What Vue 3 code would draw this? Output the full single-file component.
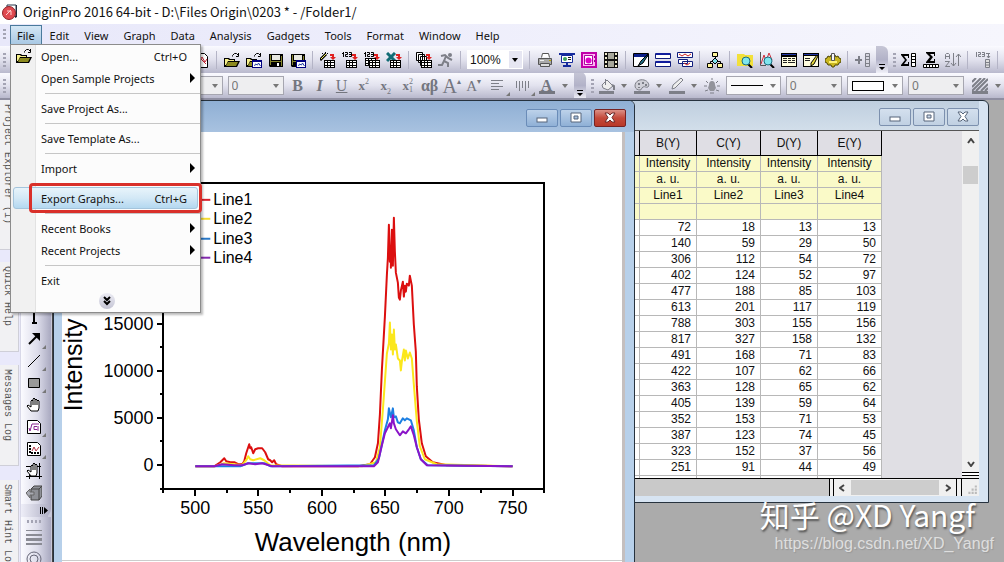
<script setup>
const menus = ['File', 'Edit', 'View', 'Graph', 'Data', 'Analysis', 'Gadgets', 'Tools', 'Format', 'Window', 'Help']

const fileMenu = [
  { label: 'Open...', key: 'Ctrl+O', icon: 'open' },
  { label: 'Open Sample Projects', sub: true },
  { sep: true },
  { label: 'Save Project As...' },
  { sep: true },
  { label: 'Save Template As...' },
  { sep: true },
  { label: 'Import', sub: true },
  { sep: true },
  { label: 'Export Graphs...', key: 'Ctrl+G', active: true },
  { sep: true },
  { label: 'Recent Books', sub: true },
  { label: 'Recent Projects', sub: true },
  { sep: true },
  { label: 'Exit' }
]

const grid = (x, y) =>
  `<path d="M${x} ${y}h11v8h-11z" fill="#000"/><path d="M${x + 1} ${y + 1}h2v1h-2zm3 0h2v1h-2zm3 0h3v1h-3zM${x + 1} ${y + 3}h2v2h-2zm3 0h2v2h-2zm3 0h3v2h-3zM${x + 1} ${y + 6}h2v1h-2zm3 0h2v1h-2zm3 0h3v1h-3z" fill="#fff"/>`
const redArrow = '<path d="M10 2h4v3h2l-3 3-3-3h2V4h-2z" fill="#e02020"/>'
const folder = '<path d="M0 6h5l1 1h5v2h5l-3 6H0z" fill="#000"/><path d="M1 7h3l1 1h5v1H4l-2 4H1z" fill="#f6f08a"/><path d="M4 10h10l-2 4H2z" fill="#8c8a1e"/><path d="M8.500 4.500v-1l2-2h2l2 2M14.500 1v3.500H12" fill="none" stroke="#000"/>'
const disk = '<path d="M1 2h14v13H2l-1-1z" fill="#000"/><path d="M4 3h8v5H4z" fill="#e8e8e0"/><path d="M2 3h1v10H2zM13 4h1v10h-1zM3 9h10v1H3z" fill="#85852c"/><path d="M9 11h2v3H9z" fill="#fff"/>'
const mini = '<path d="M6 8h10v8H6z" fill="#000080"/><path d="M7 10h8v5H7z" fill="#fff"/><path d="M8.500 14l1-2 2 1 1-2 2 3" fill="none" stroke="#223ca0"/>'
const lens = '<path d="M11 12l4 4" stroke="#000" stroke-width="2"/><circle cx="9" cy="9" r="4" fill="#7fe6ee" stroke="#1d6c80"/>'
const digits = '<path d="M1.500 0v5M0 1.500h2M3 .500h2.500v2h-2v2H6M7 .500h2.500v4H7M7 2.500h2" fill="none" stroke="#000"/>'
const gray = '#7d7f88'

const icons = {
  open: folder,
  page: '<path d="M2.500 1.500h8l3 3v11h-11z" fill="#fff" stroke="#000"/><path d="M4 12l4-7 3 5 2-3M5 5l7 7" stroke="#c02030" fill="none"/>',
  opentpl: folder + mini,
  save: disk,
  savetpl: disk + mini,
  wizard: '<path d="M0 8l6-6" stroke="#000" stroke-width="3"/><path d="M1 7l5-5" stroke="#f4ef60"/><path d="M5.500 0v2M8 1l-1 1M2 1l1 1" stroke="#000"/>' + redArrow + grid(4, 8),
  imp: digits + redArrow + grid(4, 8),
  impmulti: digits + redArrow + grid(1, 6) + grid(5, 8),
  excel: '<path d="M1 1l8 8M9 1L1 9" stroke="#116b74" stroke-width="3"/>' + redArrow + grid(4, 8),
  batch: '<path d="M.500 .500h6v8h-6zM2.500 2.500h6v8h-6zM4.500 4.500h6v9h-6z" fill="#fff" stroke="#000"/>' + redArrow + grid(5, 8),
  run: `<circle cx="12" cy="3" r="2" fill="${gray}"/><path d="M3 4l4-1 3 3 4 2M8 4L6 9l4 2v4M6 9l-2 4H0" fill="none" stroke="${gray}" stroke-width="2"/>`,
  print: '<path d="M4.500 5.500l1-4h6l1 4" fill="#fff" stroke="#555"/><path d="M1.500 6.500h13v6h-13z" fill="#a9a9a9" stroke="#555"/><path d="M3.500 11.500h9v3h-9z" fill="#ddd" stroke="#555"/><path d="M3 8.500h4" stroke="#eee"/><path d="M12 8.500h2" stroke="#b9a500"/>',
  slide: '<path d="M0 1h16v2H0z" fill="#152a9c"/><path d="M2.500 3.500h11v7h-11z" fill="#fff" stroke="#152a9c"/><circle cx="6" cy="7" r="2" fill="#3ca05a"/><path d="M9 5.500h3M9 7.500h3" stroke="#222"/><path d="M7 11h2v2h3v2H4v-2h3z" fill="#152a9c"/>',
  pink: '<path d="M0 0h16v16H0z" fill="#c000a8"/><path d="M2 2h12v12H2z" fill="#ffb4f4"/><path d="M3.500 3.500h8v9h-8z" fill="#fff" stroke="#b000a0"/><circle cx="7.500" cy="8.500" r="3" fill="#e000c8"/><path d="M13.500 4v2M13.500 8v2" stroke="#a00090"/>',
  film: '<path d="M1 0h14v16H1z" fill="#111"/><path d="M5 1h6v6H5zM5 9h6v6H5z" fill="#a8a89c"/><path d="M2 1h2v2H2zm0 4h2v2H2zm0 4h2v2H2zm0 4h2v2H2zM12 1h2v2h-2zm0 4h2v2h-2zm0 4h2v2h-2zm0 4h2v2h-2z" fill="#f0eccd"/>',
  edit: '<path d="M.500 1.500h15v13h-15z" fill="#fff" stroke="#000"/><path d="M1 2h14v3H1z" fill="#0b1f8a"/><path d="M15 2L8 9l-3 5 5-3 5-8z" fill="#1f7088" stroke="#000"/>',
  bars: '<path d="M.500 1.500h15v5H.500zM.500 9.500h15v5H.500z" fill="#fff" stroke="#101c7c"/><path d="M1 1h14v2H1zM1 9h14v2H1z" fill="#101c9c"/>',
  layers: '<path d="M.500 .500h15v5H.500z" fill="#fff" stroke="#101c7c"/><path d="M2 2l3 2 3-2 3 2 3-2" fill="none" stroke="#d02020"/><path d="M1.500 7.500h9v4h-9zM5.500 9.500h10v5h-10z" fill="#fff" stroke="#101c7c"/><path d="M7 11l3 2 3-2" fill="none" stroke="#d02020"/>',
  tree: '<path d="M5.500 .500h5v4h-5z" fill="#fff59a" stroke="#000"/><path d="M8.500 5v2M3.500 12V9.500H6M10 9.500h3.500V12" fill="none" stroke="#000"/><path d="M8 6l3 3-3 3-3-3z" fill="#7fe0ea" stroke="#000"/><path d="M.500 11.500h5v4h-5zM10.500 11.500h5v4h-5z" fill="#fff59a" stroke="#000"/>',
  find: '<path d="M0 2h7l1 1h8v11H0z" fill="#f2e03a"/>' + lens,
  findplot: '<path d="M1.500 0v13.500H7" fill="none" stroke="#555"/><path d="M2 12l3-9 2 6 3-8 3 7" fill="none" stroke="#d0303c"/>' + lens,
  tbl: '<path d="M0 1h16v14H0z" fill="#000"/><path d="M1 5h14v9H1z" fill="#fffde0"/><path d="M2 6.500h4M7 6.500h3M11 6.500h3M2 8.500h4M7 8.500h3M11 8.500h3M2 10.500h4M7 10.500h7" stroke="#222"/><path d="M1 2h14v1H1z" fill="#2438a8"/>',
  tbledit: '<path d="M0 1h16v14H0z" fill="#000"/><path d="M1 4h14v10H1z" fill="#fffde0"/><path d="M2 6.500h5M2 8.500h5" stroke="#222"/><path d="M1 2h14v1H1z" fill="#2438a8"/><path d="M14 3l-6 8v3l3-2 4-8z" fill="#e6d83c" stroke="#000"/>',
  gear: '<path d="M3 4l2 1 1-2h4l1 2 2-1 1 2 2 1v3l-2 1-1 2-3 0-1 2H7l-1-2-3 0-1-2-2-1V7l2-1z" fill="#c9b61e" stroke="#4c4400"/><path d="M4 10h8" stroke="#fff27a" stroke-width="2"/><path d="M6.500 1.500h3v7h-3z" fill="#f6f6f6" stroke="#555"/>',
  addcol: `<path d="M0 7h7v2H0zM3 4h2v8H3z" fill="${gray}"/><path d="M10.500 1.500h4v13h-4zM10 4.500h5M10 7.500h5M10 11.500h5" fill="#d6d6e0" stroke="${gray}"/>`,
  sumcol: '<path d="M0 2h8v4H7V4H3l3 4-3 4h4v-2h1v4H0v-1l4-5-4-5z" fill="#000"/><path d="M10.500 1.500h4v13h-4zM10 4.500h5M10 7.500h5M10 10.500h5" fill="#fff" stroke="#000"/>',
  sumrow: '<path d="M3 0h9v4h-1V2H7l3 3-3 4h4V7h1v4H3v-1l4-5-4-4z" fill="#000"/><path d="M.500 12.500h15v3H.500zM3.500 12v3M6.500 12v3M9.500 12v3M12.500 12v3" fill="#fff" stroke="#000"/>',
  sort: `<path d="M.500 7V2.500l1-1h2l1 1V7M1 4.500h3M0 9.500h4.500l-4 5H5M8.500 1v13M6 11l2.500 3 2.500-3M13.500 14V2M11 5l2.500-3 2.500 3" fill="none" stroke="${gray}"/>`,
  setcol: `<path d="M1.500 0v5M3 .500h2.500v2h-2v2H6M7 .500h2.500v4H7M7 2.500h2M11 1.500h4M13.500 1v5M12 4l1.500 2L15 4" fill="none" stroke="${gray}"/><path d="M10.500 7.500h4v8h-4zM10 10.500h5M10 13h5" fill="#ddd" stroke="${gray}"/>`,
  align: `<path d="M2 2.500h12M2 5.500h8M2 8.500h12M2 11.500h8" stroke="${gray}"/>`,
  valign: `<path d="M2.500 3v7M5.500 3v10M8.500 3v7M11.500 3v10M14.500 3v7" stroke="${gray}"/>`,
  fill: `<path d="M3 7l5-5 6 6-5 4-5-2z" fill="#eee" stroke="${gray}"/><path d="M6.500 1v6" stroke="${gray}"/><path d="M13 7l2 1v4" fill="none" stroke="${gray}" stroke-width="2"/><path d="M0 13h15v3H0z" fill="${gray}"/>`,
  palette: `<path d="M1 8c0-5 5-7 9-6s6 5 4 7c-2 1-3-1-5 0s-1 3-3 3-5-1-5-4z" fill="#d0d0d8" stroke="${gray}"/><path d="M4 5h2v2H4zM8 4h2v2H8zM11 6h2v2h-2zM4 9h2v1H4z" fill="${gray}"/><path d="M0 13h16v3H0z" fill="${gray}"/>`,
  pen: `<path d="M3 11l1-4 8-7 2 2-8 8z" fill="#eee" stroke="${gray}"/><path d="M0 13h16v3H0z" fill="${gray}"/>`,
  bulb: `<path d="M5 7a3 4 0 016 0l1 3-2 3H6l-2-3z" fill="#93949c"/><path d="M8 0v2M2 3l2 2M14 3l-2 2M0 8h3M13 8h3M1 13l3-1M15 13l-3-1M6 15h4" stroke="${gray}"/>`,
  hatch: `<path d="M0 4l4-4M0 9l9-9M0 13L13 0M4 13L16 1M9 13l7-7M13 13l3-3" stroke="${gray}" stroke-width="2"/><path d="M0 13h16v3H0z" fill="${gray}"/>`,
  ttool: '<path d="M3 2h11v2H9v9h2v2H6v-2h1V4H3z" fill="#000"/>',
  arrow: '<path d="M3 13L12 4" stroke="#000" stroke-width="2"/><path d="M6 2h8v8z" fill="#000"/>',
  line: '<path d="M2 14L14 2" stroke="#000"/>',
  rect: '<path d="M2.500 3.500h11v9h-11z" fill="#999" stroke="#000"/>',
  hand: '<path d="M5 14l-4-5 1-1 3 2V4l1-1 1 1V2l1-1 1 1v1l1-1 1 1v1l1-1 1 1v7l-1 3z" fill="#fff" stroke="#000"/><path d="M7 4v4M9 3v5M11 4v4" stroke="#000"/>',
  formula: '<path d="M1.500 1.500h10l3 3v10h-13z" fill="#fff" stroke="#000"/><path d="M3 9l1 3 2-7h7M11 7.500H8v3h3l1 1V7" fill="none" stroke="#8a2492"/>',
  gpage: '<path d="M1.500 1.500h10l3 3v10h-13z" fill="#fff" stroke="#000"/><path d="M4 4v8h9" fill="none" stroke="#000" stroke-dasharray="2 1" stroke-width="2"/><path d="M6 10l2-4 2 4 3-4" fill="none" stroke="#b03040"/>',
  handaxes: '<path d="M0 3.500h15M13.500 0v16M0 13.500h16M3.500 11v5" stroke="#000"/><path d="M5 13L1 8l1-1 3 2V3l1-1 1 1V1l1-1 1 1v1l1-1 1 1v8l-1 3z" fill="#fff" stroke="#000"/><path d="M7 3v4M9 2v5" stroke="#000"/>',
  cube: '<path d="M5 4l3-3h8v10l-3 4H5z" fill="#8e9096" stroke="#444"/><path d="M5 4h8v11M13 4l3-3" fill="none" stroke="#444"/><path d="M0 8l4-4v3h4v3H4v3z" fill="#a8aab2" stroke="#666"/>',
  lines: '<path d="M0 1h16v1H0zM0 5h16v2H0zM0 9h16v3H0zM0 14h16v2H0z" fill="#8a8b94"/>',
  rings: '<circle cx="8" cy="8" r="7" fill="none" stroke="#667"/><circle cx="8" cy="8" r="4" fill="none" stroke="#667"/>'
}

const barOne = [
  'page', 'page', 'page', 'page', 'page', 'page', 'page', 'page', 'page', '|',
  'open', 'opentpl', 'save', 'savetpl', '|', 'wizard', 'imp', 'impmulti', 'excel', '|', 'batch', 'run', '|',
  'ZOOM', '|', 'print', 'slide', 'pink', 'film', '|', 'edit', 'bars', 'layers', '|', 'tree', '|',
  'find', 'findplot', 'tbl', 'tbledit', 'gear', '|', 'addcol', 'MORE', 'GRIP', 'sumcol', 'sumrow', 'sort', '|', 'setcol', '|'
]

const dockTabs = [
  { text: 'Project Explorer (1)', cls: 'first' },
  { text: 'Quick Help', cls: 'second' },
  { text: 'Messages Log', cls: 'third' },
  { text: 'Smart Hint Log', cls: 'fourth' }
]
const palette = ['page', 'page', 'page', 'page', 'page', 'page', 'page', 'page', 'page', 'ttool', 'arrow', 'line', 'rect', 'hand', 'formula', 'gpage', 'handaxes', 'cube']
const cornered = ['arrow', 'line', 'rect', 'formula', 'gpage']

const columns = ['B(Y)', 'C(Y)', 'D(Y)', 'E(Y)']
const labels = [
  ['Intensity', 'Intensity', 'Intensity', 'Intensity'],
  ['a. u.', 'a. u.', 'a. u.', 'a. u.'],
  ['Line1', 'Line2', 'Line3', 'Line4'],
  ['', '', '', '']
]
const rows = [
  [72, 18, 13, 13], [140, 59, 29, 50], [306, 112, 54, 72], [402, 124, 52, 97],
  [477, 188, 85, 103], [613, 201, 117, 119], [788, 303, 155, 156], [817, 327, 158, 132],
  [491, 168, 71, 83], [422, 107, 62, 66], [363, 128, 65, 62], [405, 139, 59, 64],
  [352, 153, 71, 53], [387, 123, 74, 45], [323, 152, 37, 56], [251, 91, 44, 49],
  ['', '', '', '']
]

const yMajor = [[0, 466], [5000, 419], [10000, 372], [15000, 324]]
const yMinor = [442, 395, 348]
const xMajor = [[500, 195], [550, 258], [600, 322], [650, 385], [700, 449], [750, 513]]
const xMinor = [163, 227, 290, 354, 417, 481, 544]

const series = [
  { name: 'Line1', color: '#dc0f0f', key: '#d8202c', y: 200, pts: '195,467 214,467 217,465 220,463 222,461 224,459 226,462 230,463 234,463 238,465 242,465 244,462 246,454 249,445 250,449 251,448 253,454 255,450 258,449 262,449 265,453 268,460 270,461 272,463 274,461 276,465 282,467 358,467 370,465 375,458 378,444 380,415 382,370 385,317 387,275 388,258 389,225 390,262 391,246 391,268 392,230 393,266 394,218 395,252 396,273 398,283 399,298 400,300 401,291 403,282 404,297 405,286 406,292 407,284 409,286 410,276 412,286 414,325 416,352 417,387 419,420 422,444 426,457 433,463 447,466 513,467' },
  { name: 'Line2', color: '#fbe71c', key: '#f5dc30', y: 219, pts: '195,467 215,467 224,464 234,465 242,466 246,461 248,457 250,460 253,461 260,459 264,461 270,466 362,467 376,463 380,448 383,410 385,382 387,354 389,344 390,323 391,350 392,335 393,355 394,330 395,350 396,345 398,359 400,361 401,371 402,362 404,350 405,361 406,351 408,359 410,353 412,359 414,385 417,422 420,447 425,460 437,465 513,467' },
  { name: 'Line3', color: '#1c7fe2', key: '#2878c8', y: 239, pts: '195,467 240,467 248,464 264,464 270,467 374,466 379,459 382,445 385,431 388,420 389,409 391,418 393,409 394,418 396,417 398,423 400,424 403,419 405,421 407,419 411,421 414,431 417,448 421,460 428,466 513,467' },
  { name: 'Line4', color: '#8a14c8', key: '#842ab0', y: 258, pts: '195,467 214,467 222,465 234,466 242,466 248,464 255,465 262,464 272,467 374,467 378,463 382,446 385,434 388,428 390,424 391,429 393,416 394,424 396,430 400,436 403,432 406,434 409,430 411,427 414,436 417,448 421,460 427,466 513,467' }
]
</script>

<template>
  <div class="app">
    <header class="title">
      <svg class="logo" viewBox="0 0 16 16"><path d="M5 1h10v12l-2 1V3H5z" fill="#16202e" /><path d="M5 1h9v11H5z" fill="#fff" stroke="#26364a" /><circle cx="7" cy="9" r="6.500" fill="#e04a50" stroke="#8f2228" /><path d="M4 11l5-5M5 7h4v4" stroke="#ffd0d0" fill="none" /></svg>
      <h1>OriginPro 2016 64-bit - D:\Files Origin\0203 * - /Folder1/</h1>
    </header>

    <nav class="menubar" aria-label="Main menu">
      <i class="grip" />
      <button v-for="m in menus" :key="m" type="button" :class="{ on: m === 'File' }">{{ m }}</button>
    </nav>

    <div class="bar one">
      <i class="grip" />
      <div class="items">
        <template v-for="(it, i) in barOne" :key="i">
          <i v-if="it === '|'" class="sep" />
          <span v-else-if="it === 'ZOOM'" class="combo zoom live">
            <select aria-label="Zoom"><option>100%</option></select><b class="tri" />
          </span>
          <button v-else-if="it === 'MORE'" type="button" class="more" aria-label="More buttons"><svg viewBox="0 0 12 26"><path d="M3 17h6v1H3zM3 20h6l-3 3z" fill="#000" /></svg></button>
          <i v-else-if="it === 'GRIP'" class="grip" />
          <button v-else type="button" class="tool" :aria-label="it"><svg viewBox="0 0 16 16" v-html="icons[it]" /></button>
        </template>
      </div>
    </div>

    <div class="bar two">
      <i class="grip" />
      <span class="combo font"><select aria-label="Font"><option></option></select><b class="tri" /></span>
      <span class="combo size"><select aria-label="Font size"><option>0</option></select><b class="tri" /></span>
      <button type="button" class="tool txt bold">B</button>
      <button type="button" class="tool txt ital">I</button>
      <button type="button" class="tool txt under">U</button>
      <button type="button" class="tool txt small">x<sup>2</sup></button>
      <button type="button" class="tool txt small">x<sub>2</sub></button>
      <button type="button" class="tool txt small">x<span class="stack"><span>2</span><span>1</span></span></button>
      <button type="button" class="tool txt greek">αβ</button>
      <button type="button" class="tool txt big">A<sup>▴</sup></button>
      <button type="button" class="tool txt mid">A<sup>▾</sup></button>
      <button type="button" class="tool corner wide" aria-label="Align"><svg viewBox="0 0 16 16" v-html="icons.align" /></button>
      <button type="button" class="tool corner wide" aria-label="Vertical align"><svg viewBox="0 0 16 16" v-html="icons.valign" /></button>
      <button type="button" class="tool txt color">A</button>
      <button type="button" class="drop" aria-label="Font color options"><b class="tri" /></button>
      <button type="button" class="more" aria-label="More format buttons"><svg viewBox="0 0 12 26"><path d="M3 17h6v1H3zM3 20h6l-3 3z" fill="#000" /></svg></button>
      <i class="grip" />
      <template v-for="n in ['fill', 'palette', 'pen']" :key="n">
        <button type="button" class="tool" :aria-label="n"><svg viewBox="0 0 16 16" v-html="icons[n]" /></button>
        <button type="button" class="drop" :aria-label="n + ' options'"><b class="tri" /></button>
      </template>
      <button type="button" class="tool" aria-label="Lighting"><svg viewBox="0 0 16 16" v-html="icons.bulb" /></button>
      <span class="combo sample pale"><select aria-label="Line style"><option></option></select><i class="rule" /><b class="tri" /></span>
      <span class="combo size"><select aria-label="Line width"><option>0</option></select><b class="tri" /></span>
      <span class="combo sample pale"><select aria-label="Pattern"><option></option></select><i class="box" /><b class="tri" /></span>
      <span class="combo size"><select aria-label="Pattern width"><option>0</option></select><b class="tri" /></span>
      <button type="button" class="tool hatch" aria-label="Hatch"><svg viewBox="0 0 16 16" v-html="icons.hatch" /></button>
      <button type="button" class="drop" aria-label="Hatch options"><b class="tri" /></button>
    </div>

    <main class="work">
      <aside class="dock">
        <button v-for="t in dockTabs" :key="t.text" type="button" :class="t.cls">{{ t.text }}</button>
      </aside>
      <div class="palette">
        <div class="pgroup">
          <button v-for="(p, i) in palette" :key="i" type="button" class="tool" :class="{ corner: cornered.includes(p) }" :aria-label="p"><svg viewBox="0 0 16 16" v-html="icons[p]" /></button>
          <button type="button" class="pmore" aria-label="More tools"><svg viewBox="0 0 8 7"><path d="M0 0h1v7H0zM2 0h1v7H2zM4 0l4 3.500L4 7z" fill="#000" /></svg></button>
        </div>
        <div class="pgroup next">
          <i class="hgrip" />
          <button type="button" class="tool" aria-label="Line widths"><svg viewBox="0 0 16 16" v-html="icons.lines" /></button>
          <button type="button" class="tool" aria-label="Rings"><svg viewBox="0 0 16 16" v-html="icons.rings" /></button>
        </div>
      </div>

      <div class="desktop">
        <section class="win sheet" aria-label="Worksheet">
          <div class="wtitle">
            <button type="button" aria-label="Minimize sheet"><svg viewBox="0 0 14 14"><rect x="2" y="7" width="10" height="4" fill="#fff" stroke="#56657a" /></svg></button>
            <button type="button" aria-label="Maximize sheet"><svg viewBox="0 0 14 14"><path d="M2 2h10v9H2zM5 5v3h4V5z" fill="#fff" fill-rule="evenodd" stroke="#56657a" /></svg></button>
            <button type="button" aria-label="Close sheet"><svg viewBox="0 0 14 14"><path d="M2 2h3l2 2 2-2h3L9 6.500l3 4.500H9L7 9l-2 2H2l3-4.500z" fill="#fff" stroke="#56657a" /></svg></button>
          </div>
          <div class="sbody">
            <div class="tablebox">
              <table>
                <thead>
                  <tr><th class="lead" /><th v-for="c in columns" :key="c">{{ c }}</th></tr>
                </thead>
                <tbody>
                  <tr v-for="(r, i) in labels" :key="'l' + i" class="label"><td /><td v-for="(c, j) in r" :key="j">{{ c }}</td></tr>
                  <tr v-for="(r, i) in rows" :key="'r' + i"><td /><td v-for="(c, j) in r" :key="j">{{ c }}</td></tr>
                </tbody>
              </table>
            </div>
            <div class="vscroll">
              <svg viewBox="0 0 8 6"><path d="M1 5l3-4 3 4" fill="none" stroke="#444" stroke-width="2" /></svg>
              <i class="thumb" />
              <svg class="down" viewBox="0 0 8 6"><path d="M1 1l3 4 3-4" fill="none" stroke="#444" stroke-width="2" /></svg>
              <i class="split" />
            </div>
          </div>
          <div class="sfoot">
            <i class="tabs" />
            <div class="hscroll">
              <svg viewBox="0 0 6 8"><path d="M5 1L1 4l4 3" fill="none" stroke="#444" stroke-width="2" /></svg>
              <i class="thumb" />
              <svg viewBox="0 0 6 8"><path d="M1 1l4 3-4 3" fill="none" stroke="#444" stroke-width="2" /></svg>
            </div>
            <svg class="sizer" viewBox="0 0 16 16"><path d="M12 6h2v2h-2zM9 9h2v2H9zM12 9h2v2h-2zM6 12h2v2H6zM9 12h2v2H9zM12 12h2v2h-2z" fill="#bbb" /></svg>
          </div>
        </section>

        <section class="win graph" aria-label="Graph">
          <div class="wtitle">
            <button type="button" aria-label="Minimize graph"><svg viewBox="0 0 14 14"><rect x="2" y="7" width="10" height="4" fill="#fff" stroke="#56657a" /></svg></button>
            <button type="button" aria-label="Maximize graph"><svg viewBox="0 0 14 14"><path d="M2 2h10v9H2zM5 5v3h4V5z" fill="#fff" fill-rule="evenodd" stroke="#56657a" /></svg></button>
            <button type="button" class="close" aria-label="Close graph"><svg viewBox="0 0 14 14"><path d="M2 2h3l2 2 2-2h3L9 6.500l3 4.500H9L7 9l-2 2H2l3-4.500z" fill="#fff" stroke="#6b2a2a" /></svg></button>
          </div>
          <div class="gbody">
            <svg class="plot" viewBox="62 132 560 429">
              <g fill="none" stroke="#000" stroke-width="2" shape-rendering="crispEdges">
                <rect x="163" y="183" width="381" height="307" />
                <path v-for="t in yMajor" :key="'a' + t[0]" :d="`M157 ${t[1]}h6`" />
                <path v-for="t in yMinor" :key="'b' + t" :d="`M160 ${t}h3`" />
                <path d="M160 490h3" />
                <path v-for="t in xMajor" :key="'c' + t[0]" :d="`M${t[1]} 490v7`" />
                <path v-for="t in xMinor" :key="'d' + t" :d="`M${t} 490v4`" />
              </g>
              <g font-size="18">
                <text v-for="t in yMajor" :key="t[0]" x="153" :y="t[1] + 6" text-anchor="end">{{ t[0] }}</text>
                <text v-for="t in xMajor" :key="t[0]" :x="t[1]" y="515" text-anchor="middle">{{ t[0] }}</text>
              </g>
              <text x="353" y="552" font-size="26" text-anchor="middle">Wavelength (nm)</text>
              <text transform="translate(81 412) rotate(-90)" font-size="25">Intensity</text>
              <g v-for="s in series" :key="s.name">
                <polyline :points="s.pts" fill="none" :stroke="s.color" stroke-width="2" stroke-linejoin="round" />
                <path :d="`M180 ${s.y}h30`" :stroke="s.key" stroke-width="2" />
                <text x="213" :y="s.y + 5" font-size="16">{{ s.name }}</text>
              </g>
            </svg>
          </div>
        </section>

        <div class="marks">
          <p class="zhihu">知乎 @XD Yangf</p>
          <p class="csdn">https://blog.csdn.net/XD_Yangf</p>
        </div>
      </div>
    </main>

    <div class="dropdown" role="menu">
      <template v-for="(m, i) in fileMenu" :key="i">
        <i v-if="m.sep" class="msep" />
        <button v-else type="button" role="menuitem" class="mitem" :class="{ active: m.active }">
          <svg v-if="m.icon" class="micon" viewBox="0 0 16 16" v-html="icons[m.icon]" />
          <span>{{ m.label }}</span>
          <kbd v-if="m.key">{{ m.key }}</kbd>
          <b v-if="m.sub" class="sub" />
          <i v-if="m.active" class="frame" />
        </button>
      </template>
      <button type="button" class="expand" aria-label="Show full menu"><svg viewBox="0 0 14 14"><path d="M4 3l3 3 3-3M4 7l3 3 3-3" fill="none" stroke="#000" stroke-width="2" /></svg></button>
    </div>
  </div>
</template>

<style>
body { margin: 0; }
</style>

<style scoped>
* { box-sizing: border-box; }
.app { position: relative; display: flex; flex-direction: column; height: 100vh; overflow: hidden; background: #ebebfa; color: #111; font-family: "Noto Sans", "Noto Sans CJK SC", sans-serif; font-size: 11px; }
button { margin: 0; padding: 0; border: 0; background: none; font: inherit; color: inherit; }
button, i, b, svg { flex: none; }
svg { display: block; }

.title { display: flex; align-items: center; gap: 5px; height: 24px; padding-left: 2px; background: #fff; }
.logo { width: 16px; height: 16px; }
h1 { margin: 0; font-family: "Noto Sans CJK SC", "Noto Sans", sans-serif; font-size: 13px; font-weight: 400; line-height: 20px; white-space: nowrap; }

.grip { width: 3px; height: 14px; margin: 0 2px 0 3px; background: repeating-linear-gradient(#a4a4b4 0 2px, transparent 2px 4px); }
.menubar { display: flex; align-items: center; height: 22px; background: linear-gradient(90deg, #e8e8fa, #f6f6fd); }
.menubar .grip { height: 12px; }
.menubar button { height: 20px; margin-left: 1px; padding: 0 7px; white-space: nowrap; }
.menubar .on { margin-left: 2px; padding: 0 6px; border: 1px solid #4a7a9c; border-bottom-color: #88a8c4; background: linear-gradient(#d4e7f5, #a9c9e4); }

.bar { display: flex; align-items: center; height: 27px; background: linear-gradient(#fafaff, #e2e2ee 50%, #b9b9cd); overflow: hidden; }
.bar.two { border-bottom: 2px solid #8f8fa2; }
.items { display: flex; align-items: center; padding-left: 7px; }
.tool { position: relative; display: flex; align-items: center; justify-content: center; width: 22px; height: 22px; }
.tool svg { width: 16px; height: 16px; }
.wide { width: 25px; }
.corner::after { content: ""; position: absolute; right: 0; bottom: 1px; border: 2px solid transparent; border-right-color: #777; border-bottom-color: #777; }
.sep { width: 1px; height: 18px; margin: 0 4px 0 3px; background: #b4b4c6; }
.tri { width: 0; border: 3px solid transparent; border-top: 4px solid #777; border-bottom: 0; }
.drop { display: flex; align-items: center; justify-content: center; width: 13px; height: 22px; }
.more { width: 12px; height: 27px; margin: 0 2px; background: linear-gradient(#c6c6d6, #b2b2c8 50%, #f0f0f8); border-radius: 0 6px 0 0; }
.more svg { width: 12px; height: 26px; }
.combo { position: relative; display: flex; align-items: center; height: 19px; border: 1px solid #a6a6b0; background: #eeeef0; }
.combo select { width: 100%; height: 100%; padding: 0 3px; border: 0; appearance: none; background: none; color: #777; font-family: inherit; font-size: 12px; opacity: 1; }
.combo .tri { position: absolute; right: 4px; }
.live { border-color: #fff; background: #fff; }
.live select { padding: 0 2px; color: #111; font-family: "Liberation Sans", sans-serif; }
.live::before { content: ""; position: absolute; right: 0; width: 13px; height: 100%; background: #e6e6f2; }
.live .tri { border-top-color: #000; }
.zoom { width: 56px; margin: 0 3px 0 2px; }
.font { width: 212px; margin-left: 6px; }
.size { width: 57px; margin-left: 5px; }
.two .size + .txt { margin-left: 3px; }
.sample { width: 56px; margin-left: 3px; }
.size + .sample { width: 57px; margin-left: 5px; }
.pale { background: #f8f8fa; }
.rule, .box { position: absolute; left: 4px; width: 32px; height: 1px; background: #000; }
.box { height: 10px; border: 1px solid #000; background: #fff; }
.hatch { margin-left: 5px; }
.txt { color: #74767f; font-family: "Liberation Serif", serif; font-size: 16px; line-height: 20px; }
.bold, .small, .greek { font-weight: 700; }
.ital { font-style: italic; font-weight: 700; }
.under { text-decoration: underline; }
.small { font-size: 13px; }
.txt sup, .txt sub { align-self: flex-start; font-size: 8px; line-height: 14px; font-weight: 400; }
.txt sub { align-self: flex-end; line-height: 10px; }
.stack { display: flex; flex-direction: column; font-size: 8px; line-height: 8px; font-weight: 400; }
.big { font-size: 20px; }
.mid { font-size: 15px; }
.color { width: 24px; font-weight: 700; line-height: 15px; }
.color::after { content: ""; position: absolute; left: 4px; right: 4px; bottom: 3px; height: 3px; background: #74767f; }

.work { display: flex; flex: 1; min-height: 0; }
.dock { display: flex; flex-direction: column; width: 20px; background: #e9e9fb; overflow: hidden; }
.dock button { width: 19px; padding: 4px 4px 0 0; border-right: 1px solid #cfcfd8; border-bottom: 1px solid #cfcfd8; background: #f1f1f3; color: #555; font-family: "Liberation Mono", monospace; font-size: 10px; line-height: 14px; text-align: left; writing-mode: vertical-rl; white-space: nowrap; }
.dock .first { height: 150px; }
.dock .second { height: 90px; margin-top: 12px; }
.dock .third { height: 101px; margin-top: 13px; }
.dock .fourth { height: 120px; margin-top: 14px; }
.palette { display: flex; flex-direction: column; width: 33px; padding-right: 1px; background: #c8c8d8; border-right: 1px solid #444; border-left: 1px solid #d8d8e8; overflow: hidden; }
.pgroup { display: flex; flex-direction: column; align-items: center; padding: 8px 4px 0 0; border-radius: 0 0 8px 0; background: linear-gradient(90deg, #fbfbff, #dcdcea 55%, #a9a9c0); }
.pgroup .tool { width: 24px; }
.pmore { display: flex; align-items: center; justify-content: flex-end; width: 27px; height: 13px; background: linear-gradient(90deg, #eeeef8, #b4b4c8); }
.pmore svg { width: 8px; height: 7px; }
.next { flex: 1; padding-top: 3px; border-radius: 0; }
.hgrip { width: 15px; height: 3px; margin: 0 0 3px; background: repeating-linear-gradient(90deg, #a4a4b4 0 2px, transparent 2px 4px); }

.desktop { position: relative; flex: 1; min-width: 0; background: #ababab; overflow: hidden; }
.win { position: absolute; display: flex; flex-direction: column; border: 1px solid #26323e; border-radius: 0 6px 0 0; font-family: "Liberation Sans", Arial, sans-serif; }
.wtitle { display: flex; justify-content: flex-end; gap: 2px; height: 31px; padding: 7px 0 0; }
.wtitle button { display: flex; align-items: center; justify-content: center; width: 32px; height: 18px; border: 1px solid #7c90ae; border-radius: 2px; background: linear-gradient(#d4e0ee, #c0d0e2); }
.wtitle svg { width: 14px; height: 14px; }
.graph { top: 0; left: 0; width: 582px; height: 520px; background: #b7d0ea; }
.graph .wtitle { padding: 8px 8px 0 0; background: linear-gradient(#8fafd4, #a8c2e0); border-radius: 0 5px 0 0; }
.graph .wtitle button { background: linear-gradient(#bdd2ea, #8fb0d6); border-color: #6a8cb8; }
.graph .wtitle .close { border-color: #722; background: linear-gradient(#dc9086, #c4493a 50%, #b83828); }
.gbody { flex: 1; margin: 0 9px 8px 8px; border-right: 3px solid #c4bfbf; background: #fff; overflow: hidden; }
.plot { width: 560px; height: 429px; font-family: "Liberation Sans", Arial, sans-serif; border-bottom: 1px solid #ccc; }

.sheet { top: 0; left: 540px; width: 396px; height: 403px; padding: 0 9px 6px 0; background: #d7e4f2; }
.sheet .wtitle { height: 30px; border-bottom: 1px solid #555; background: linear-gradient(#bfcfdf, #d2deea); }
.sbody { display: flex; height: 347px; background: #e0dfe4; overflow: hidden; }
.tablebox { flex: 1; overflow: hidden; }
table { table-layout: fixed; width: 287px; border-collapse: collapse; font-size: 12px; line-height: 15px; background: #fff; }
th, td { padding: 0 5px 0 0; border: 1px solid #b8b8b8; border-top: 0; text-align: right; overflow: hidden; }
td { height: 16px; }
th { width: 64px; height: 24px; padding: 2px 0 0; border: 1px solid #000; border-top: 0; background: #dfdee4; font-weight: 400; text-align: center; }
th.lead { width: 45px; }
th:nth-child(2), th:nth-child(4) { width: 57px; }
.label td { padding: 0; background: #fafac8; text-align: center; }
.vscroll { display: flex; flex-direction: column; align-items: center; width: 17px; padding-top: 7px; background: #f0f0f0; }
.vscroll svg { width: 8px; height: 6px; }
.vscroll .thumb { width: 15px; height: 18px; margin-top: 22px; background: #cdcdcd; }
.vscroll .down { margin-top: auto; margin-bottom: 5px; }
.split { width: 17px; height: 4px; margin-bottom: 2px; border: 1px solid #000; border-width: 1px 0; background: #fff; }
.sfoot { display: flex; height: 18px; border-top: 1px solid #000; background: #f0f0f0; }
.tabs { flex: 1; background: #c9c9c9; border-right: 1px solid #000; }
.hscroll { display: flex; align-items: center; justify-content: space-between; width: 124px; margin: 0 4px 0 3px; padding: 0 5px; border: 1px solid #000; border-width: 0 1px; }
.hscroll svg { width: 6px; height: 8px; }
.hscroll .thumb { width: 88px; height: 15px; background: #cdcdcd; }
.sizer { width: 18px; height: 17px; border-left: 1px solid #000; }

.marks { position: absolute; right: 10px; bottom: 8px; font-family: "Noto Sans CJK SC", sans-serif; text-align: right; }
.marks p { margin: 0; white-space: nowrap; }
.zhihu { padding-right: 19px; color: #fff; font-size: 30px; line-height: 40px; text-shadow: 1px 2px 2px #555; }
.csdn { color: #dedede; font-family: "Liberation Sans", Arial, sans-serif; font-size: 16px; line-height: 20px; text-shadow: 1px 1px 1px #999; }

.dropdown { position: absolute; top: 44px; left: 10px; width: 191px; padding: 0 0 2px; border: 1px solid #8c8c8c; background: linear-gradient(90deg, #f1f1f1 24px, #e2e2e2 24px 25px, #fcfcfc 25px); box-shadow: 2px 2px 2px #0004; }
.mitem { position: relative; display: flex; align-items: center; width: 185px; height: 22px; margin-left: 2px; padding: 0 10px 0 27px; border: 1px solid transparent; border-radius: 3px; text-align: left; white-space: nowrap; }
.mitem span { flex: 1; }
.mitem.active { border-color: #a4c4dc; background: linear-gradient(#e8f4fb, #d3e8f6 50%, #b4d8f0); }
kbd { font: inherit; }
.micon { position: absolute; left: 2px; width: 16px; height: 16px; }
.sub { width: 0; margin-right: -8px; border: 5px solid transparent; border-left-color: #000; border-right: 0; }
.frame { position: absolute; top: -5px; right: -5px; bottom: -5px; left: 15px; border: 3px solid #d9302a; border-radius: 4px; }
.msep { display: block; height: 1px; margin: 4px 0 3px 34px; background: #c6c6c6; }
.expand { display: flex; align-items: center; justify-content: center; width: 16px; height: 16px; margin: 2px auto 1px 88px; border-radius: 50%; background: linear-gradient(#ececf4, #c4c4d4); }
.expand svg { width: 14px; height: 14px; }
</style>
